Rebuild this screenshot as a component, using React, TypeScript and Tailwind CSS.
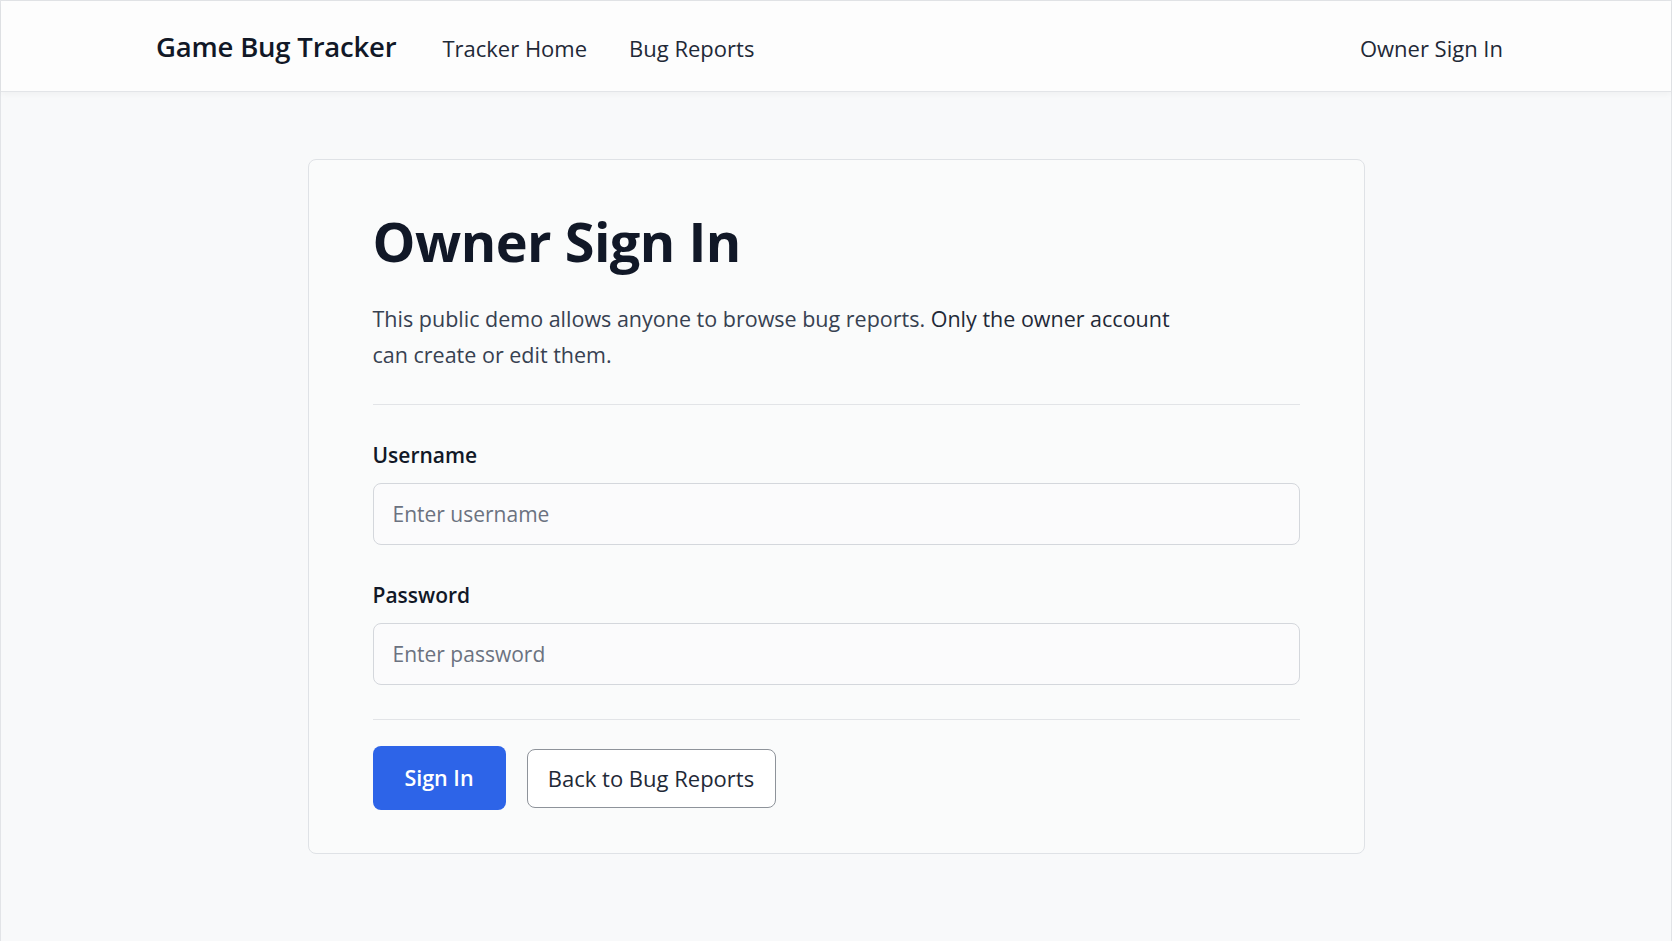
import React from 'react';

const font = { fontFamily: '"Open Sans", "Noto Sans", sans-serif' };

function Header() {
  return (
    <header className="h-[91px] bg-[#fdfdfd] border-b border-[#e3e5e8] shadow-[0_2px_6px_rgba(0,0,0,0.04)]">
      <div className="h-full flex items-center justify-between pl-[155px] pr-[168px] pt-[4px]">
        <div className="flex items-center">
          <span className="text-[27.5px] font-semibold text-[#111827] tracking-[-0.2px] -mt-[2px]">Game Bug Tracker</span>
          <nav className="flex items-center gap-[42px] ml-[46px] text-[22px] text-[#1f2937]">
            <a href="#">Tracker Home</a>
            <a href="#">Bug Reports</a>
          </nav>
        </div>
        <a href="#" className="text-[22px] text-[#1f2937]">Owner Sign In</a>
      </div>
    </header>
  );
}

function Field({ label, placeholder, type }: { label: string; placeholder: string; type: string }) {
  return (
    <div className="flex flex-col">
      <label className="text-[21px] leading-[28px] font-semibold text-[#111827]">{label}</label>
      <input
        type={type}
        placeholder={placeholder}
        className="mt-[14px] h-[62px] w-full rounded-lg border border-[#d4d7dc] bg-[#fbfbfc] px-[19px] text-[21px] text-[#111827] placeholder:text-[#6b7280] outline-none"
        style={font}
      />
    </div>
  );
}

export default function App() {
  return (
    <div className="min-h-[941px] bg-[#f8f9fa] border border-[#e2e4e7]" style={font}>
      <Header />
      <main className="flex justify-center pt-[67px] pb-[87px]">
        <div className="w-[1057px] rounded-lg border border-[#dfe2e6] bg-[#fafbfb] px-16 pt-[49px] pb-[43px]">
          <h1 className="text-[54px] leading-[65px] font-bold text-[#111827] tracking-[-0.5px]">Owner Sign In</h1>
          <p className="mt-[27px] text-[21.5px] leading-[36px] text-[#374151]">
            This public demo allows anyone to browse bug reports.{' '}
            <span className="text-[#1f2937]">Only the owner account</span>
            <br />
            can create or edit them.
          </p>
          <hr className="mt-[31px] border-[#e2e4e7]" />
          <div className="mt-[36px] flex flex-col gap-[36px]">
            <Field label="Username" placeholder="Enter username" type="text" />
            <Field label="Password" placeholder="Enter password" type="password" />
          </div>
          <hr className="mt-[34px] border-[#e2e4e7]" />
          <div className="mt-[26px] flex items-center gap-[21px]">
            <button className="h-[64px] w-[133px] rounded-lg bg-[#2d64e8] text-[21.5px] font-semibold text-white">
              Sign In
            </button>
            <button className="h-[59px] w-[249px] rounded-lg border border-[#8e939a] bg-white text-[22px] text-[#1f2937]">
              Back to Bug Reports
            </button>
          </div>
        </div>
      </main>
    </div>
  );
}
